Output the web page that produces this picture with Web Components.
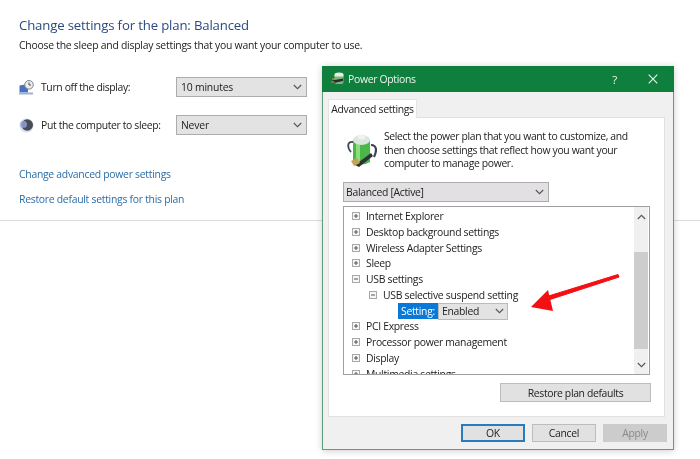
<!DOCTYPE html>
<html lang="en">
<head>
<meta charset="utf-8">
<title>Power Options</title>
<style>
  html, body { margin: 0; height: 100%; background: #fff; }
  body { position: relative; width: 700px; height: 459px; overflow: hidden; font-family: "Open Sans", "Noto Sans", sans-serif; font-size: 10.4px; letter-spacing: -.3px; color: #222; filter: blur(.3px); }
</style>
</head>
<body>
<plan-page></plan-page>
<power-dialog></power-dialog>

<script>
const chevron = `<svg width="9" height="6" viewBox="0 0 9 6"><path d="M.8 1 4.5 4.7 8.2 1" fill="none" stroke="#555" stroke-width="1.1"/></svg>`;

class WinSelect extends HTMLElement {
  constructor() {
    super();
    this.attachShadow({ mode: "open" });
  }
  connectedCallback() {
    this.shadowRoot.innerHTML = `
      <style>
        :host {
          display: flex;
          align-items: center;
          justify-content: space-between;
          box-sizing: border-box;
          padding: 0 4px;
          background: #e3e3e3;
          border: 1px solid #acacac;
          color: #222;
        }
      </style>
      <slot></slot>${chevron}`;
  }
}
customElements.define("win-select", WinSelect);

class WinButton extends HTMLElement {
  constructor() {
    super();
    this.attachShadow({ mode: "open" });
  }
  connectedCallback() {
    this.shadowRoot.innerHTML = `
      <style>
        :host {
          display: flex;
          align-items: center;
          justify-content: center;
          box-sizing: border-box;
          background: #e1e1e1;
          border: 1px solid #bdbdbd;
          color: #222;
        }
        :host([primary]) { border: 2px solid #2a7bbd; }
        :host([disabled]) { background: #cccccc; border-color: #cccccc; color: #8a8a8a; }
      </style>
      <slot></slot>`;
  }
}
customElements.define("win-button", WinButton);

class PlanPage extends HTMLElement {
  constructor() {
    super();
    this.attachShadow({ mode: "open" });
  }
  connectedCallback() {
    this.shadowRoot.innerHTML = `
      <style>
        :host { display: block; height: 221px; box-sizing: border-box; border-bottom: 1px solid #dcdcdc; padding: 16px 0 0 19px; }
        h1 { margin: 0; font-size: 13.2px; line-height: 18px; font-weight: 400; letter-spacing: -.16px; color: #2b4a80; }
        p { margin: 4px 0 0; line-height: 15px; letter-spacing: -.24px; color: #222; }
        .row { display: flex; align-items: center; height: 20px; letter-spacing: -.35px; }
        .row svg { width: 15px; height: 15px; margin-right: 7px; flex: none; }
        .row span { width: 135px; }
        win-select { width: 131px; height: 20px; letter-spacing: -.2px; }
        .first { margin-top: 24px; }
        .second { margin-top: 18px; }
        a { display: block; color: #2a6da8; line-height: 15px; text-decoration: none; letter-spacing: -.27px; }
        .links { margin-top: 32px; }
        .links a + a { margin-top: 10px; }
      </style>
      <h1>Change settings for the plan: Balanced</h1>
      <p>Choose the sleep and display settings that you want your computer to use.</p>
      <div class="row first">
        <svg viewBox="0 0 15 15">
          <path d="M.5 5.500 9 4v8.500H.5z" fill="#4a70c4"/>
          <path d="M0 12.500h14V14.500H0z" fill="#9fb0d0"/>
          <circle cx="10" cy="4.800" r="4.300" fill="#ececec" stroke="#7a8496" stroke-width="1"/>
          <path d="M10 2.400v2.600h2" fill="none" stroke="#555" stroke-width="1"/>
        </svg>
        <span>Turn off the display:</span>
        <win-select>10 minutes</win-select>
      </div>
      <div class="row second">
        <svg viewBox="0 0 15 15">
          <circle cx="7.500" cy="7.500" r="7" fill="#d3def2"/>
          <circle cx="8.200" cy="7" r="5.800" fill="#484b58"/>
          <circle cx="4.600" cy="6.400" r="3.400" fill="#93a6d6" opacity=".8"/>
        </svg>
        <span>Put the computer to sleep:</span>
        <win-select>Never</win-select>
      </div>
      <div class="links">
        <a href="#">Change advanced power settings</a>
        <a href="#">Restore default settings for this plan</a>
      </div>`;
  }
}
customElements.define("plan-page", PlanPage);

class TreeRow extends HTMLElement {
  constructor() {
    super();
    this.attachShadow({ mode: "open" });
  }
  connectedCallback() {
    const open = this.hasAttribute("open");
    this.shadowRoot.innerHTML = `
      <style>
        :host { display: flex; align-items: center; height: 15.7px; padding-left: 8px; color: #222; white-space: nowrap; }
        :host([level="2"]) { padding-left: 25px; }
        svg { margin-right: 6px; flex: none; }
      </style>
      <svg width="8" height="8" viewBox="0 0 8 8">
        <rect x=".5" y=".5" width="7" height="7" fill="#f6f6f6" stroke="#a8a8a8"/>
        <path d="M2 4h4${open ? "" : "M4 2v4"}" stroke="#555"/>
      </svg>
      <slot></slot>`;
  }
}
customElements.define("tree-row", TreeRow);

class SettingsTree extends HTMLElement {
  constructor() {
    super();
    this.attachShadow({ mode: "open" });
  }
  connectedCallback() {
    this.shadowRoot.innerHTML = `
      <style>
        :host { display: flex; box-sizing: border-box; width: 307px; height: 169px; border: 1px solid #9f9f9f; background: #fff; overflow: hidden; margin-top: 4px; }
        .rows { flex: 1; padding-top: 1.5px; overflow: hidden; }
        .setting { display: flex; height: 16px; padding-left: 54px; }
        .setting b { font-weight: 400; width: 40px; background: #0a78d7; color: #fff; display: flex; align-items: center; justify-content: center; }
        win-select { width: 70px; height: 17px; padding: 0 3px; border-color: #bbb; }
        .bar { width: 14px; margin-right: 1px; display: flex; flex-direction: column; align-items: center; background: #f0f0f0; }
        .up, .down { height: 19px; flex: none; display: flex; align-items: center; justify-content: center; }
        .up svg { transform: rotate(180deg); }
        .gap { height: 26px; }
        .thumb { height: 97px; width: 100%; background: #cdcdcd; }
        .rest { flex: 1; }
      </style>
      <div class="rows">
        <tree-row>Internet Explorer</tree-row>
        <tree-row>Desktop background settings</tree-row>
        <tree-row>Wireless Adapter Settings</tree-row>
        <tree-row>Sleep</tree-row>
        <tree-row open>USB settings</tree-row>
        <tree-row open level="2">USB selective suspend setting</tree-row>
        <div class="setting"><b>Setting:</b><win-select>Enabled</win-select></div>
        <tree-row>PCI Express</tree-row>
        <tree-row>Processor power management</tree-row>
        <tree-row>Display</tree-row>
        <tree-row>Multimedia settings</tree-row>
      </div>
      <div class="bar">
        <div class="up">${chevron}</div>
        <div class="gap"></div>
        <div class="thumb"></div>
        <div class="rest"></div>
        <div class="down">${chevron}</div>
      </div>`;
  }
}
customElements.define("settings-tree", SettingsTree);

class PowerDialog extends HTMLElement {
  constructor() {
    super();
    this.attachShadow({ mode: "open" });
  }
  connectedCallback() {
    this.shadowRoot.innerHTML = `
      <style>
        :host {
          position: absolute;
          left: 322px;
          top: 66px;
          width: 352px;
          height: 384px;
          box-sizing: border-box;
          display: flex;
          flex-direction: column;
          background: #f0f0f0;
          border: 1px solid #5d9f78;
          border-top: 0;
          box-shadow: 0 1px 7px rgba(0,0,0,.2);
          color: #222;
        }
        .title { height: 26px; flex: none; margin: 0 -1px; background: #0f7f3d; color: #eef6f0; display: flex; align-items: center; padding-left: 9px; }
        .title svg { margin-right: 1px; }
        .title .help { margin-left: auto; margin-right: 31px; font-size: 11.5px; }
        .title .close { margin-right: 16px; display: flex; }
        .title .close svg { margin: 0; }
        .tab { align-self: flex-start; margin: 7px 0 -1px 5px; position: relative; z-index: 1; background: #fff; height: 19px; width: 89px; display: flex; align-items: center; justify-content: center; box-sizing: border-box; border: 1px solid #e4e4e4; border-bottom: 0; white-space: nowrap; letter-spacing: -.32px; }
        .panel { box-sizing: border-box; flex: none; width: 337px; height: 300px; margin-left: 5px; background: #fff; border: 1px solid #e0e0e0; padding: 0 0 0 14px; display: flex; flex-direction: column; }
        .intro { display: flex; height: 64px; padding-top: 12px; box-sizing: border-box; }
        .intro svg { margin: 2px 7px 0 4px; flex: none; }
        .intro p { margin: 0; line-height: 13.6px; width: 255px; letter-spacing: -.35px; }
        win-select.plan { width: 206px; height: 20px; padding-left: 2px; background: #e2e0e2; }
        .restore { align-self: flex-end; width: 151px; height: 19px; margin: 8px 13px 0 0; letter-spacing: -.35px; }
        .footer { flex: 1; display: flex; justify-content: flex-end; gap: 7px; padding: 7px 6px 0 0; }
        .footer win-button { width: 64px; height: 18px; }
      </style>
      <div class="title">
        <svg width="16" height="14" viewBox="0 0 16 14">
          <rect x="3.500" y="2" width="9" height="10" rx="2" fill="#79b97e"/>
          <path d="M3.500 2.500a4.500 2 0 0 1 9 0v2h-9z" fill="#e6eee6"/>
          <path d="M1 8.500 12 6.500v2.600L3 11z" fill="#2b2b2b"/>
          <path d="M1 7h3M.5 10h3" stroke="#c9a94e" stroke-width="1"/>
        </svg>
        Power Options
        <span class="help">?</span>
        <span class="close"><svg width="10" height="10" viewBox="0 0 10 10"><path d="M.7.7l8.600 8.600M9.300.7.7 9.300" stroke="#eef6f0" stroke-width="1.100"/></svg></span>
      </div>
      <div class="tab">Advanced settings</div>
      <div class="panel">
        <div class="intro">
          <svg width="30" height="38" viewBox="0 0 30 38">
            <path d="M6 10C0 9 0 16 4 20" fill="none" stroke="#3a4654" stroke-width="1.800"/>
            <path d="M24 13c6 0 6 6 3 12" fill="none" stroke="#3a4654" stroke-width="2.200"/>
            <path d="M6 8h17v22q-8.500 5-17 0z" fill="#49b848"/>
            <path d="M9 10h4v20H9z" fill="#8edc7f"/>
            <ellipse cx="14.500" cy="8" rx="8.500" ry="5" fill="#dbe6dc"/>
            <ellipse cx="14.500" cy="5" rx="4" ry="2.600" fill="#eef3ee"/>
            <path d="M8 33 24 21l2 3-14 11z" fill="#2f3136"/>
            <path d="M4 29l6-3 3 5-6 3z" fill="#c6a35a"/>
          </svg>
          <p>Select the power plan that you want to customize, and then choose settings that reflect how you want your computer to manage power.</p>
        </div>
        <win-select class="plan">Balanced [Active]</win-select>
        <settings-tree></settings-tree>
        <win-button class="restore">Restore plan defaults</win-button>
      </div>
      <div class="footer">
        <win-button primary>OK</win-button>
        <win-button>Cancel</win-button>
        <win-button disabled>Apply</win-button>
      </div>
      <svg style="position:absolute;left:199px;top:200px" width="100" height="50" viewBox="0 0 100 50">
        <path d="M97 11 28 33.500 26.500 30 96 8.500z" fill="#f40f12" stroke="#f40f12" stroke-width="1" stroke-linejoin="round"/>
        <path d="M9 41 26 24 31 45z" fill="#f40f12"/>
      </svg>`;
  }
}
customElements.define("power-dialog", PowerDialog);
</script>
</body>
</html>
